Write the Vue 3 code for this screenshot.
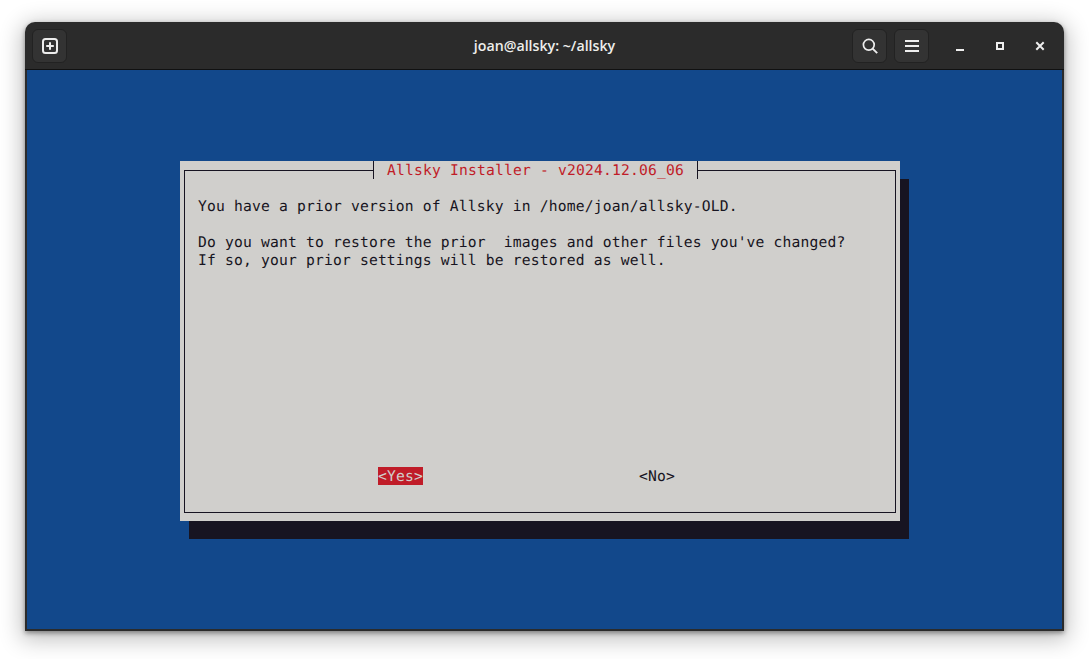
<script setup>
const lines = [
  'You have a prior version of Allsky in /home/joan/allsky-OLD.',
  '',
  "Do you want to restore the prior  images and other files you've changed?",
  'If so, your prior settings will be restored as well.'
]
</script>

<template>
  <div class="page">
    <div class="window">
      <header class="headerbar">
        <div class="side">
          <button class="hbtn" aria-label="New tab">
            <svg width="16" height="16" viewBox="0 0 16 16" fill="none">
              <rect x="1" y="1" width="14" height="14" rx="2.5" stroke="#eee" stroke-width="2" />
              <path d="M8 4.2v7.6M4.2 8h7.6" stroke="#eee" stroke-width="2" />
            </svg>
          </button>
        </div>
        <div class="title">joan@allsky: ~/allsky</div>
        <div class="side right">
          <button class="hbtn" aria-label="Search">
            <svg width="16" height="16" viewBox="0 0 16 16" fill="none">
              <circle cx="6.8" cy="6.8" r="5.4" stroke="#eee" stroke-width="1.7" />
              <path d="M10.6 10.6l4.6 4.6" stroke="#eee" stroke-width="1.9" />
            </svg>
          </button>
          <button class="hbtn" aria-label="Menu">
            <svg width="14" height="14" viewBox="0 0 14 14" fill="none">
              <path d="M0 2h14M0 7h14M0 12h14" stroke="#eee" stroke-width="2" />
            </svg>
          </button>
          <div class="controls">
            <svg width="40" height="16" viewBox="0 0 16 16" fill="none">
              <path d="M4 12h8" stroke="#eee" stroke-width="2" />
            </svg>
            <svg width="40" height="16" viewBox="0 0 16 16" fill="none">
              <rect x="5" y="5" width="6" height="6" stroke="#eee" stroke-width="2" />
            </svg>
            <svg width="40" height="16" viewBox="0 0 16 16" fill="none">
              <path d="M4.3 4.3l7.4 7.4M11.7 4.3l-7.4 7.4" stroke="#eee" stroke-width="2" />
            </svg>
          </div>
        </div>
      </header>
      <main class="terminal">
        <section class="dialog">
          <div class="box">
            <div class="box-title"><span>Allsky Installer - v2024.12.06_06</span></div>
            <div class="message">
              <div v-for="(line, i) in lines" :key="i" class="line">{{ line }}</div>
            </div>
            <div class="actions">
              <span class="action active">&lt;Yes&gt;</span>
              <span class="action">&lt;No&gt;</span>
            </div>
          </div>
        </section>
      </main>
    </div>
  </div>
</template>

<style scoped>
.page {
  width: 1089px;
  height: 659px;
  padding: 22px 25px 28px;
  box-sizing: border-box;
  background: #fff;
}
.window {
  height: 609px;
  display: flex;
  flex-direction: column;
  border-radius: 10px 10px 0 0;
  background: #2b2b2b;
  box-shadow: 0 2px 5px rgba(0, 0, 0, 0.4), 0 5px 22px 4px rgba(0, 0, 0, 0.24);
  padding: 0 2px 2px;
  box-sizing: border-box;
}
.headerbar {
  height: 47px;
  flex: none;
  display: flex;
  align-items: center;
  border-bottom: 1px solid #111;
  margin: 0 -2px;
  padding-left: 7px;
}
.side {
  flex: 1 1 0;
  display: flex;
  align-items: center;
  gap: 7px;
}
.right {
  justify-content: flex-end;
}
.hbtn {
  width: 35px;
  height: 34px;
  padding: 0;
  margin: 0;
  flex: none;
  display: flex;
  align-items: center;
  justify-content: center;
  background: #333;
  border: 1px solid #222;
  border-radius: 6px;
  box-sizing: border-box;
}
.title {
  flex: none;
  color: #eeeeec;
  font: 600 14.2px "Open Sans", "Noto Sans", sans-serif;
  margin-left: -7px;
}
.controls {
  flex: none;
  display: flex;
  margin-left: 4px;
  padding-right: 4px;
}
.terminal {
  flex: 1;
  min-height: 0;
  background: #12488b;
  padding: 91px 0 0 153px;
  box-sizing: border-box;
  font: 14.67px/20px "DejaVu Sans Mono", monospace;
  letter-spacing: 0.17px;
  white-space: pre;
  text-rendering: geometricPrecision;
}
.dialog {
  width: 720px;
  height: 360px;
  background: #d0cfcc;
  box-shadow: 9px 18px 0 #171421;
  padding: 9px 4px 8px 4px;
  box-sizing: border-box;
  color: #171421;
}
.box {
  position: relative;
  height: 100%;
  border: 1px solid #171421;
  box-sizing: border-box;
  padding: 26px 13px 0;
  display: flex;
  flex-direction: column;
}
.box-title {
  position: absolute;
  top: -10px;
  left: 188px;
  width: 325px;
  height: 18px;
  box-sizing: border-box;
  background: #d0cfcc;
  border-left: 1px solid #171421;
  border-right: 1px solid #171421;
  text-align: center;
  color: #c01c28;
}
.message {
  flex: 1;
}
.line {
  height: 18px;
}
.actions {
  display: flex;
  padding: 0 0 27px 180px;
}
.action {
  height: 18px;
}
.active {
  background: #c01c28;
  color: #d0cfcc;
  margin-right: 216px;
}
</style>

<style>
html, body {
  margin: 0;
  overflow: hidden;
  background: #fff;
}
</style>
